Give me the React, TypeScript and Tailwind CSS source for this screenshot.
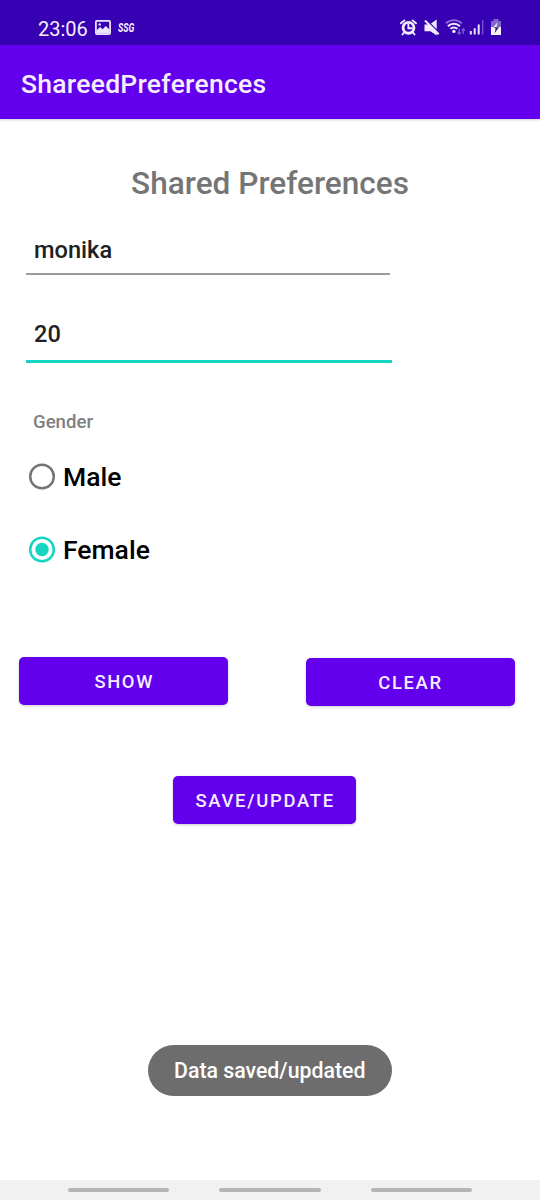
import type { ReactNode } from "react";

function ImageIcon() {
  return (
    <svg className="ml-[8px] mt-[20px] h-[15px] w-[16px]" viewBox="0 0 16 15">
      <rect x="0.9" y="0.9" width="14.2" height="13.2" rx="1" fill="none" stroke="#ece4ff" strokeWidth="1.8" />
      <path d="M1.5 10.2 5.2 7l2.4 2.3L10.7 6 14.5 9.6V13.5h-13Z" fill="#ece4ff" />
      <circle cx="4.7" cy="4.5" r="1.2" fill="#ece4ff" />
    </svg>
  );
}

function AlarmIcon() {
  return (
    <svg className="h-[17px] w-[17px]" viewBox="0 0 17 17">
      <circle cx="8.5" cy="8.8" r="5.4" fill="none" stroke="#f1eaff" strokeWidth="2.9" />
      <path d="M8.4 5.5v3.7h3.2M1 4.3 4.4 1.4M16 4.3l-3.4-2.9M4 13.5l-1.5 2M13 13.5l1.5 2" fill="none" stroke="#f1eaff" strokeWidth="1.9" strokeLinecap="round" />
    </svg>
  );
}

function MuteIcon() {
  return (
    <svg className="ml-[7px] h-[17px] w-[16px]" viewBox="0 0 16 17">
      <path d="M0.5 5.5h4L12.7 13.7v2.8L6.4 12.2H0.5ZM7 4.5l5.7-4v9.7Z" fill="#f1eaff" />
      <path d="m1 1.5 13.7 13.7" stroke="#f1eaff" strokeWidth="2" />
    </svg>
  );
}

function WifiIcon() {
  return (
    <svg className="ml-[5px] h-[17px] w-[21px]" viewBox="0 0 21 17">
      <path d="M1 5.4a11 11 0 0 1 15.8 0" transform="translate(0 -1)" fill="none" stroke="#8b6dd6" strokeWidth="1.8" />
      <path d="M2.9 7.2a8.5 8.5 0 0 1 12 0M5.5 9.8a4.8 4.8 0 0 1 6.8 0" fill="none" stroke="#eee6ff" strokeWidth="2" />
      <circle cx="8.9" cy="12.4" r="1.7" fill="#f1eaff" />
      <path d="M14.2 9.8v5M12.5 13.2l1.7 1.9 1.7-1.9M18.3 15v-5M16.7 11.7l1.6-1.9 1.6 1.9" fill="none" stroke="#7658cd" strokeWidth="1.4" />
    </svg>
  );
}

function SignalIcon() {
  return (
    <svg className="ml-[3px] h-[17px] w-[15px]" viewBox="0 0 15 17">
      <path d="M1.8 12v3.5M5.7 9.2v6.3M9.7 5.4v10.1" stroke="#ece4ff" strokeWidth="2" />
      <path d="M13.7 1.2v14.3" stroke="#7350cb" strokeWidth="1.5" />
    </svg>
  );
}

function BatteryIcon() {
  return (
    <svg className="ml-[6px] h-[17px] w-[12px]" viewBox="0 0 12 17">
      <path d="M3.5 0h5v2H11v6H1V2h2.5Z" fill="#8464d0" />
      <path d="M1 8h10v8H1Z" fill="#f5efff" />
      <path d="M7.6 3.3 3 8.4h6.2l-2.8-.7Z" fill="#f5efff" />
      <path d="M3.2 8.3 5.6 9.4l-1 4.8L9 8.3Z" fill="#33265f" />
    </svg>
  );
}

function StatusBar() {
  return (
    <div className="flex h-[45px] shrink-0 bg-[#3700b3] pl-[38px] text-[#f4efff]">
      <span className="mt-[17px] w-[49px] text-[20px] leading-[24px] font-normal">23:06</span>
      <ImageIcon />
      <span className="ml-[7px] mt-[19px] block h-[16px] w-[18px]">
        <span className="block w-max origin-left scale-x-[0.7] text-[12.5px] leading-[18px] font-bold italic">SSG</span>
      </span>
      <div className="mt-[19px] mr-[38px] ml-auto flex">
        <AlarmIcon />
        <MuteIcon />
        <WifiIcon />
        <SignalIcon />
        <BatteryIcon />
      </div>
    </div>
  );
}

function Radio({ label, checked = false }: { label: string; checked?: boolean }) {
  return (
    <label className="flex h-[32px] items-center gap-[7px] pl-[28px] text-[26.5px] leading-[32px] text-black">
      <svg className="h-[28px] w-[28px]" viewBox="0 0 28 28">
        <circle cx="14" cy="13.5" r="11.8" fill="none" stroke={checked ? "#14d6c1" : "#757575"} strokeWidth="2.5" />
        {checked && <circle cx="14" cy="13.5" r="6.7" fill="#14d6c1" />}
      </svg>
      <span>{label}</span>
    </label>
  );
}

function Button({ className, children }: { className: string; children: ReactNode }) {
  return (
    <button
      className={`flex h-[48px] items-center justify-center rounded-[5px] bg-[#6200ee] pt-[2px] text-[18.4px] font-medium text-[#f5eeff] shadow-[0_1px_3px_rgba(0,0,0,0.2)] ${className}`}
    >
      {children}
    </button>
  );
}

export default function App() {
  return (
    <div className="flex h-[1200px] w-[540px] flex-col overflow-hidden bg-white font-['Roboto',sans-serif] font-medium">
      <StatusBar />
      <header className="flex h-[74px] shrink-0 items-center bg-[#6200ee] pt-[4px] pl-[21px] text-[26.5px] tracking-[0.26px] text-[#f5eeff] shadow-[0_1px_3px_rgba(0,0,0,0.2)]">
        ShareedPreferences
      </header>
      <main className="flex min-h-0 flex-1 flex-col">
        <h1 className="mt-[45px] text-center text-[31.6px] leading-[40px] text-[#757575]">Shared Preferences</h1>
        <div className="mt-[29px] ml-[26px] h-[42px] w-[364px] border-b-2 border-[#9b9b9b] pl-[8px] text-[23.6px] leading-[35px] text-[#212121]">monika</div>
        <div className="mt-[42px] ml-[26px] h-[45.5px] w-[366px] border-b-[3px] border-[#14d6c1] pl-[8px] text-[23.6px] leading-[35px] text-[#212121]">20</div>
        <div className="mt-[47.5px] ml-[33px] text-[18.6px] leading-[24px] text-[#808080]">Gender</div>
        <div className="mt-[26.5px] flex flex-col gap-[41.5px]">
          <Radio label="Male" />
          <Radio label="Female" checked />
        </div>
        <div className="mt-[91px] flex items-start justify-between pr-[25.5px] pl-[19.4px]">
          <Button className="w-[208.6px] pl-px tracking-[1.64px]">SHOW</Button>
          <Button className="mt-[0.5px] w-[209px] pl-px tracking-[1.64px]">CLEAR</Button>
        </div>
        <Button className="mt-[70.5px] ml-[173.4px] w-[182.6px] pl-px tracking-[1.75px]">SAVE/UPDATE</Button>
        <div className="mt-[220.5px] ml-[148px] flex h-[51.5px] w-[243.5px] items-center justify-center rounded-full bg-[#6d6d6d] pt-[2px] text-[21.3px] text-white">
          Data saved/updated
        </div>
      </main>
      <nav className="flex h-[20px] shrink-0 items-center justify-center gap-[50px] bg-[#f1f1f1]">
        <span className="h-[4.5px] w-[101.5px] rounded-full bg-[#b5b5b5]" />
        <span className="h-[4.5px] w-[101.5px] rounded-full bg-[#b5b5b5]" />
        <span className="h-[4.5px] w-[101.5px] rounded-full bg-[#b5b5b5]" />
      </nav>
    </div>
  );
}
